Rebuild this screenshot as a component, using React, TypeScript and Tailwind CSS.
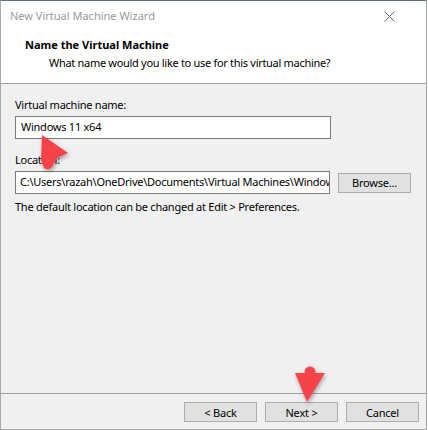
import React from 'react';

const FONT = { fontFamily: '"Noto Sans", "Liberation Sans", sans-serif' };

function WinButton({ children, className = '' }: { children: React.ReactNode; className?: string }) {
  return (
    <button className={`h-[20px] w-[73px] bg-[#e1e1e1] border border-[#adadad] text-[11px] tracking-[-0.2px] text-black leading-none ${className}`}>
      {children}
    </button>
  );
}

function Arrows() {
  return (
    <svg className="absolute inset-0 pointer-events-none" width="428" height="430" viewBox="0 0 428 430">
      <defs>
        <filter id="sh" x="-50%" y="-50%" width="200%" height="200%">
          <feDropShadow dx="1" dy="2" stdDeviation="2" floodColor="#000" floodOpacity="0.35" />
        </filter>
      </defs>
      {/* arrow pointing at the name field */}
      <path
        d="M42 135 L68 153 L57 158 L52 167 Q48 171 44 168 L41 160 Z"
        fill="#f6424a"
        filter="url(#sh)"
      />
      {/* arrow pointing at Next */}
      <g filter="url(#sh)">
        <circle cx="310" cy="372" r="5.5" fill="#f6424a" />
        <path d="M295 373 L325 373 L307 402 Z" fill="#f6424a" />
      </g>
    </svg>
  );
}

export default function App() {
  return (
    <div className="relative w-[428px] h-[430px] overflow-hidden bg-white" style={FONT}>
      <div className="flex flex-col w-[427px] h-[430px] bg-[#f0f0f0] border-t border-t-[#5d7383] border-l border-r border-b border-[#a9a9a9]">
        {/* title bar */}
        <div className="h-[30px] flex items-center justify-between bg-white pl-[9px] pr-[31px]">
          <span className="text-[11px] text-[#9a9a9a]">New Virtual Machine Wizard</span>
          <svg width="11" height="11" viewBox="0 0 11 11">
            <path d="M0.5 0.5 L10.5 10.5 M10.5 0.5 L0.5 10.5" stroke="#6b6b6b" strokeWidth="1" />
          </svg>
        </div>

        {/* header */}
        <div className="bg-white pt-[6px] pb-[12px] pl-[24px] border-b border-[#a0a0a0]">
          <div className="text-[11px] font-bold leading-[16px] text-black">Name the Virtual Machine</div>
          <div className="text-[11px] tracking-[-0.3px] leading-[16px] text-black pl-[24px] mt-[2px]">
            What name would you like to use for this virtual machine?
          </div>
        </div>

        {/* body */}
        <div className="flex-1 flex flex-col pt-[13px] pl-[14px] text-[11px] tracking-[-0.25px] text-black">
          <div className="leading-[16px]">Virtual machine name:</div>
          <div className="mt-[3px] w-[316px] h-[23px] bg-white border border-[#7a7a7a] flex items-center pl-[5px]">
            Windows 11 x64
          </div>

          <div className="leading-[16px] mt-[13px]">Location:</div>
          <div className="mt-[3px] flex items-center gap-[8px]">
            <div className="w-[315px] h-[23px] bg-white border border-[#7a7a7a] flex items-center pl-[4px] overflow-hidden whitespace-nowrap">
              <span className="shrink-0">C:\Users\razah\OneDrive\Documents\Virtual Machines\Windows 11 x64</span>
            </div>
            <WinButton className="shrink-0">Browse...</WinButton>
          </div>

          <div className="leading-[16px] mt-[5px]">The default location can be changed at Edit &gt; Preferences.</div>
        </div>

        {/* footer */}
        <div className="h-[36px] border-t border-[#a0a0a0] flex justify-end items-start pt-[8px] pr-[7px] gap-[8px]">
          <WinButton>&lt; Back</WinButton>
          <WinButton>Next &gt;</WinButton>
          <WinButton>Cancel</WinButton>
        </div>
      </div>
      <Arrows />
    </div>
  );
}
